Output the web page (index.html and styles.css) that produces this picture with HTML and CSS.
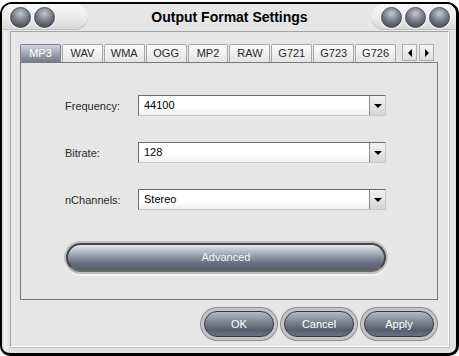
FILE: index.html
```html
<!DOCTYPE html>
<html lang="en">
<head>
    <meta charset="UTF-8">
    <title>Output Format Settings</title>
    <link rel="stylesheet" href="styles.css">
</head>
<body>
    <div class="window">
        <!-- Title bar -->
        <div class="titlebar">
            <div class="pill pill-left">
                <span class="orb"></span>
                <span class="orb"></span>
            </div>
            <h1 class="title">Output Format Settings</h1>
            <div class="pill pill-right">
                <span class="orb"></span>
                <span class="orb"></span>
                <span class="orb"></span>
            </div>
        </div>

        <div class="client">
            <!-- Format tabs -->
            <div class="tabs">
                <div class="tab active">MP3</div>
                <div class="tab">WAV</div>
                <div class="tab">WMA</div>
                <div class="tab">OGG</div>
                <div class="tab">MP2</div>
                <div class="tab">RAW</div>
                <div class="tab">G721</div>
                <div class="tab">G723</div>
                <div class="tab">G726</div>
                <div class="scroll">
                    <span class="scroll-btn"><span class="tri tri-left"></span></span>
                    <span class="scroll-btn"><span class="tri tri-right"></span></span>
                </div>
            </div>

            <div class="panel">
                <div class="field">
                    <label>Frequency:</label>
                    <div class="combo">
                        <span class="combo-value">44100</span>
                        <span class="combo-arrow"><span class="tri tri-down"></span></span>
                    </div>
                </div>
                <div class="field">
                    <label>Bitrate:</label>
                    <div class="combo">
                        <span class="combo-value">128</span>
                        <span class="combo-arrow"><span class="tri tri-down"></span></span>
                    </div>
                </div>
                <div class="field">
                    <label>nChannels:</label>
                    <div class="combo">
                        <span class="combo-value">Stereo</span>
                        <span class="combo-arrow"><span class="tri tri-down"></span></span>
                    </div>
                </div>
                <div class="advanced">Advanced</div>
            </div>

            <!-- Dialog buttons -->
            <div class="actions">
                <div class="btn">OK</div>
                <div class="btn">Cancel</div>
                <div class="btn">Apply</div>
            </div>
        </div>
    </div>
</body>
</html>
```

FILE: styles.css
```css
body {
    margin: 0;
    background-color: #ffffff;
    font-family: 'Liberation Sans', Arial, sans-serif;
    font-size: 11px;
    color: #000000;
}

.window {
    box-sizing: border-box;
    width: 459px;
    height: 354px;
    margin-top: 2px;
    border: 2px solid #000000;
    border-right-width: 3px;
    border-bottom-width: 3px;
    border-radius: 12px 12px 10px 10px;
    background: linear-gradient(90deg, #d6d6d6 0, #f2f2f2 3px, #e2e2e2 7px);
    overflow: hidden;
    display: flex;
    flex-direction: column;
}

.titlebar {
    display: flex;
    align-items: flex-start;
    height: 27px;
    background-color: #e6e6e6;
}

.pill {
    display: flex;
    align-items: center;
    gap: 3px;
    height: 26px;
    background: linear-gradient(#f8f8f8, #ececec 50%, #d4d4d4);
    box-shadow: inset 0 -1px 0 #c2c2c2;
}

.pill-left {
    width: 78px;
    padding-left: 8px;
    border-radius: 0 13px 13px 0;
}

.pill-right {
    width: 75px;
    padding-left: 10px;
    border-radius: 13px 0 0 13px;
}

.orb {
    width: 19px;
    height: 19px;
    border-radius: 50%;
    border: 1px solid #4b4f57;
    background: radial-gradient(circle at 50% 30%, #c4c8cf 0, #8a8f98 35%, #555a63 70%, #3e424a 100%);
    box-shadow: 0 0 0 1px #f4f4f4;
}

.title {
    flex: 1;
    margin: 0;
    font-size: 14px;
    font-weight: bold;
    line-height: 26px;
    text-align: center;
}

.client {
    flex: 1;
    margin: 0 7px 6px 8px;
    padding: 12px 14px 0 9px;
    background-color: #e6e6e6;
    border: 1px solid;
    border-color: #a4a4a4 #ffffff #ffffff #a4a4a4;
    box-shadow: 1px 1px 0 #bcbcbc;
}

.tabs {
    display: flex;
    height: 18px;
}

.tab {
    box-sizing: border-box;
    width: 41px;
    height: 18px;
    margin-right: 1px;
    border: 1px solid #a8a8a8;
    border-bottom: none;
    border-radius: 2px 2px 0 0;
    background: linear-gradient(#fafafa, #e4e4e4);
    text-align: center;
    line-height: 17px;
    color: #2a2a2a;
}

.tab.active {
    border-color: #7d8494;
    background: linear-gradient(#d2d5db, #9aa0ac 55%, #747b8a);
    color: #ffffff;
}

.scroll {
    display: flex;
    gap: 2px;
    margin-left: 5px;
}

.scroll-btn {
    box-sizing: border-box;
    display: flex;
    align-items: center;
    justify-content: center;
    width: 15px;
    height: 17px;
    border: 1px solid #b0b0b0;
    background: linear-gradient(#f6f6f6, #dedede);
}

.tri {
    width: 0;
    height: 0;
    border-style: solid;
}

.tri-left {
    border-width: 4px 4px 4px 0;
    border-color: transparent #000000 transparent transparent;
}

.tri-right {
    border-width: 4px 0 4px 4px;
    border-color: transparent transparent transparent #000000;
}

.tri-down {
    border-width: 4px 4px 0 4px;
    border-color: #000000 transparent transparent transparent;
}

.panel {
    box-sizing: border-box;
    height: 238px;
    width: 418px;
    padding: 32px 0 0 44px;
    border: 1px solid #7a7a7a;
    background-color: #e6e6e6;
}

.field {
    display: flex;
    align-items: center;
    margin-bottom: 26px;
}

.field label {
    width: 73px;
    color: #2a2a2a;
}

.combo {
    box-sizing: border-box;
    display: flex;
    width: 248px;
    height: 21px;
    border: 1px solid;
    border-color: #6e6e6e #c8c8c8 #c8c8c8 #6e6e6e;
}

.combo-value {
    flex: 1;
    padding-left: 5px;
    line-height: 19px;
    background: linear-gradient(#ffffff, #ffffff 60%, #f0f0f0);
    border-right: 1px solid #8a8a8a;
}

.combo-arrow {
    display: flex;
    align-items: center;
    justify-content: center;
    width: 15px;
    background: linear-gradient(#f2f2f2, #d6d6d6);
}

.advanced {
    box-sizing: border-box;
    width: 320px;
    height: 29px;
    margin-top: 33px;
    margin-left: 1px;
    border: 2px solid #444444;
    border-bottom-color: #6a6a6a;
    border-radius: 15px;
    background: linear-gradient(#e6e8ec, #a4aab4 35%, #6a7282 70%, #535b6a);
    box-shadow: 0 0 0 2px #bdbdbd, 0 2px 0 2px #f2f2f2;
    color: #f4f4f4;
    text-align: center;
    line-height: 25px;
}

.actions {
    display: flex;
    justify-content: flex-end;
    gap: 10px;
    margin-top: 11px;
}

.btn {
    box-sizing: border-box;
    width: 70px;
    height: 26px;
    border: 1px solid #33383f;
    border-radius: 13px;
    background: linear-gradient(#b6bbc4, #7f8694 40%, #565d6c 75%, #6b7282);
    box-shadow: 0 0 0 3px #c4c4c4, 0 0 0 4px #8e8e8e;
    color: #ffffff;
    text-align: center;
    line-height: 24px;
}
```
